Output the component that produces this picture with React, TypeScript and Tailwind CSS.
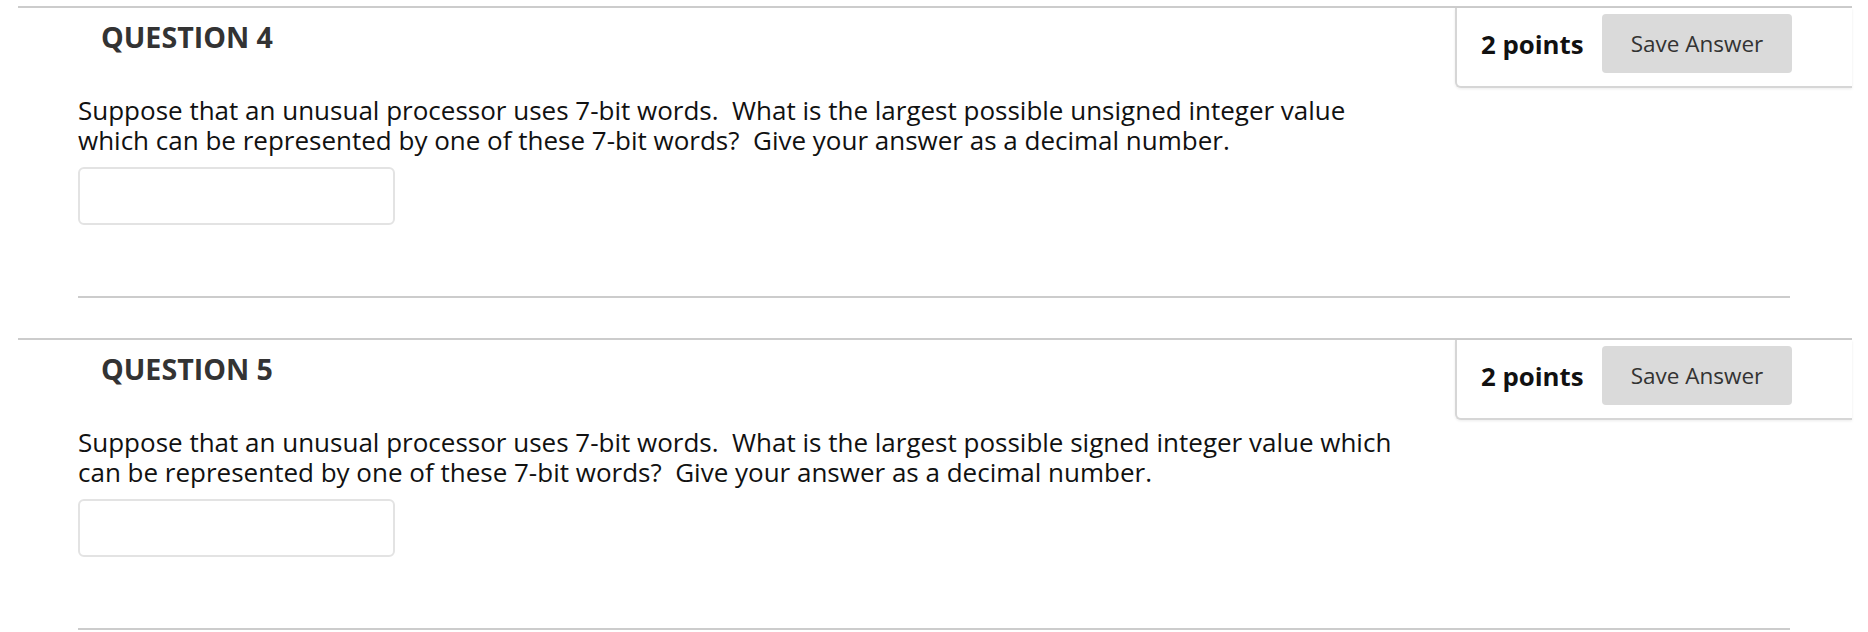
const questions = [
  {
    number: 4,
    lines: [
      "Suppose that an unusual processor uses 7-bit words.  What is the largest possible unsigned integer value",
      "which can be represented by one of these 7-bit words?  Give your answer as a decimal number.",
    ],
  },
  {
    number: 5,
    lines: [
      "Suppose that an unusual processor uses 7-bit words.  What is the largest possible signed integer value which",
      "can be represented by one of these 7-bit words?  Give your answer as a decimal number.",
    ],
  },
];

const PointsBox = () => (
  <div className="float-right w-[397px] flex items-center pl-[24px] pr-[60px] pt-[6px] pb-[13px] border-l-2 border-b-2 border-[#d6d6d6] rounded-bl-[6px] bg-white shadow-[0_1px_3px_rgba(0,0,0,0.08)]">
    <span className="flex-1 text-[25.8px] leading-[36px] font-bold text-[#111111]">
      2 points
    </span>
    <button
      type="button"
      className="w-[190px] h-[59px] rounded-[4px] bg-[#dadada] text-[22.5px] text-[#333333]"
    >
      Save Answer
    </button>
  </div>
);

const Question = ({ number, lines }: { number: number; lines: string[] }) => {
  return (
    <section className="border-t-2 border-[#cccccc]">
      <PointsBox />
      <div className="ml-[60px]">
        <h3 className="pl-[23px] pt-[13px] text-[28.6px] leading-[32px] font-bold text-[#333333]">
          QUESTION {number}
        </h3>
        <div className="mt-[42px] text-[26px] leading-[30px] text-[#111111] whitespace-pre">
          {lines.map((line) => (
            <div key={line}>{line}</div>
          ))}
        </div>
        <input
          type="text"
          className="block mt-[12px] w-[317px] h-[58px] border-2 border-[#e3e3e3] rounded-[6px] bg-white"
        />
        <div className="mt-[71px] h-[2px] w-[1712px] bg-[#cccccc]" />
      </div>
      <div className="clear-both h-[40px]" />
    </section>
  );
};

export default function App() {
  return (
    <div className="h-[632px] overflow-hidden bg-white pt-[6px] pl-[18px] pr-[16px] font-['Open_Sans',sans-serif]">
      {questions.map((q) => (
        <Question key={q.number} number={q.number} lines={q.lines} />
      ))}
    </div>
  );
}
